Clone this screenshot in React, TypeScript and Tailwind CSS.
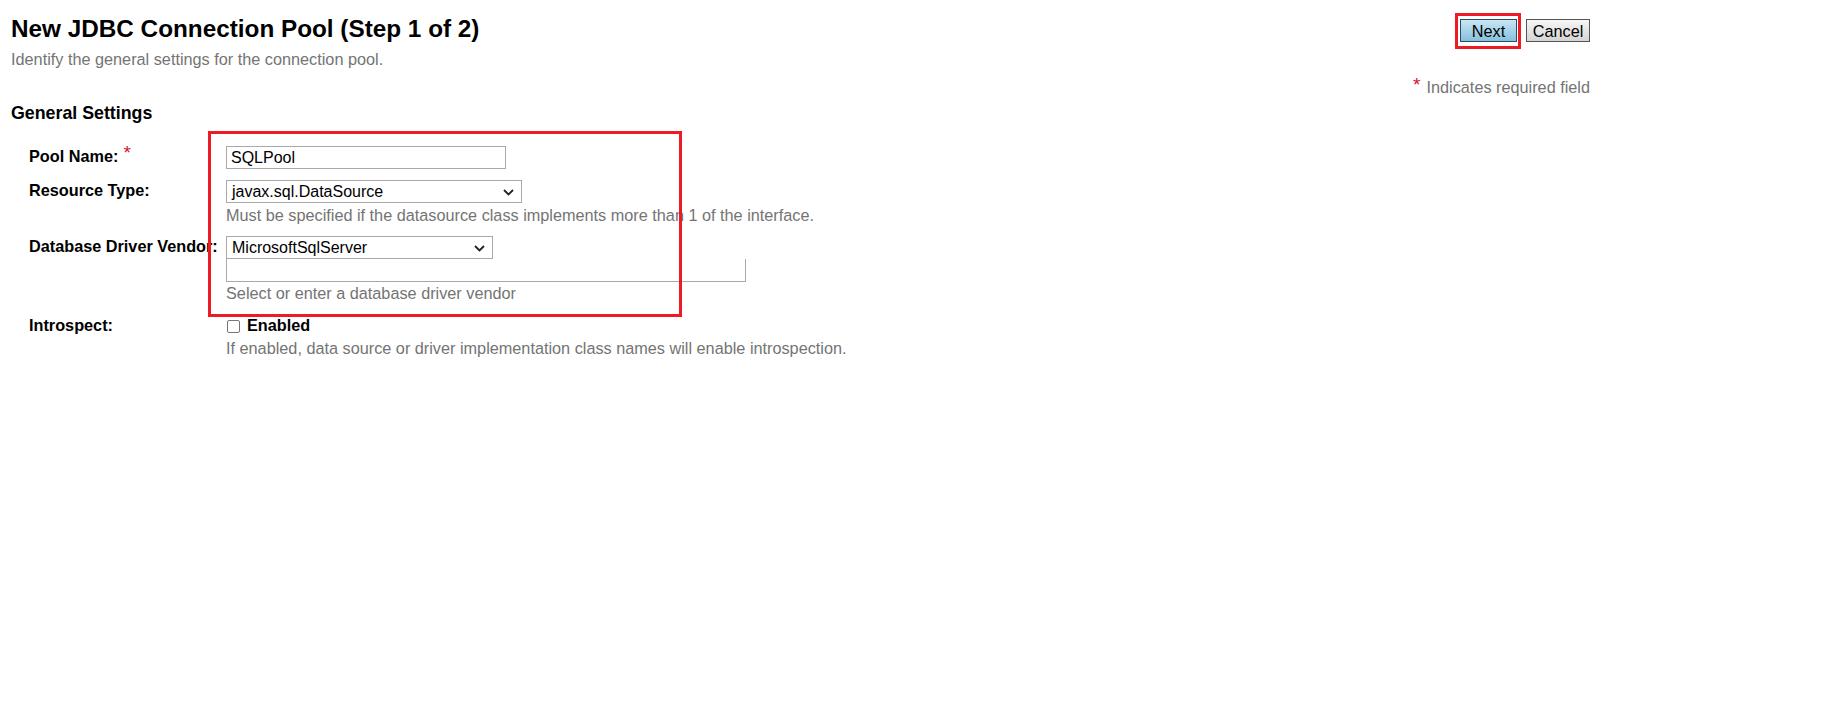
import React from "react";

function Chevron() {
  return (
    <svg width="11" height="7" viewBox="0 0 11 7" className="absolute right-[7px] top-[8px]" fill="none">
      <path d="M1 1 L5.5 5.5 L10 1" stroke="#222" strokeWidth="1.8" />
    </svg>
  );
}

export default function App() {
  return (
    <div className="min-h-[711px] w-full bg-white text-black font-['Liberation_Sans',Arial,sans-serif]">
      <div className="relative w-[1590px] pl-[11px] pt-[15px]">
        {/* Header */}
        <div className="flex justify-between">
          <div>
            <h1 className="text-[24.3px] leading-[28px] font-bold">New JDBC Connection Pool (Step 1 of 2)</h1>
            <p className="mt-[6.5px] text-[16.25px] leading-[19px] text-[#747474]">
              Identify the general settings for the connection pool.
            </p>
          </div>
          <div className="flex h-fit gap-[9px] pt-[4px]">
            <div className="relative">
              <button className="h-[23px] w-[57px] border border-[#2f4d60] bg-gradient-to-b from-[#c9e6f4] to-[#86c0de] text-[16.25px] leading-[20px] text-black">
                Next
              </button>
              <div className="pointer-events-none absolute left-[-5px] top-[-6px] h-[36px] w-[66px] border-[3px] border-[#ed1c24]" />
            </div>
            <button className="h-[23px] w-[64px] border border-[#555] bg-gradient-to-b from-[#f6f6f6] to-[#d4d4d4] text-[16.25px] leading-[20px] text-black">
              Cancel
            </button>
          </div>
        </div>

        <div className="mt-[9px] flex justify-end text-[16.25px] leading-[19px] text-[#747474]">
          <span className="relative top-[0px] mr-[6px] text-[19px] leading-[14px] text-[#d0142c]">*</span>
          <span>Indicates required field</span>
        </div>

        <h2 className="mt-[6px] text-[17.8px] leading-[21px] font-bold">General Settings</h2>

        {/* Form */}
        <div className="mt-[22.5px] grid grid-cols-[197px_1fr] pl-[18px] text-[16.25px] leading-[20px]">
          {/* Pool Name */}
          <div className="font-bold">
            Pool Name:<span className="relative top-[-3px] ml-[5px] text-[19px] font-normal text-[#d0142c]">*</span>
          </div>
          <div>
            <div className="flex h-[23px] w-[280px] items-center border border-[#a9a9a9] px-[4px] text-[16px]">SQLPool</div>
          </div>

          {/* Resource Type */}
          <div className="mt-[11px] font-bold">Resource Type:</div>
          <div className="mt-[11px]">
            <div className="relative flex h-[23px] w-[296px] items-center border border-[#a9a9a9] px-[5px] text-[16px]">
              javax.sql.DataSource
              <Chevron />
            </div>
            <div className="mt-[3px] text-[16.25px] leading-[19px] text-[#747474]">
              Must be specified if the datasource class implements more than 1 of the interface.
            </div>
          </div>

          {/* Database Driver Vendor */}
          <div className="mt-[11px] whitespace-nowrap font-bold">Database Driver Vendor:</div>
          <div className="mt-[11px]">
            <div className="relative flex h-[23px] w-[267px] items-center border border-[#a9a9a9] px-[5px] text-[16px]">
              MicrosoftSqlServer
              <Chevron />
            </div>
            <div className="h-[23px] w-[520px] border border-t-0 border-[#a9a9a9]" />
            <div className="mt-[1.5px] text-[16.25px] leading-[19px] text-[#747474]">
              Select or enter a database driver vendor
            </div>
          </div>

          {/* Introspect */}
          <div className="mt-[12.5px] font-bold">Introspect:</div>
          <div className="mt-[12.5px]">
            <div className="flex items-center gap-[7px]">
              <span className="ml-[1px] mt-[2px] inline-block h-[13px] w-[13px] rounded-[2px] border border-[#767676] bg-white" />
              <span className="font-bold">Enabled</span>
            </div>
            <div className="mt-[4px] text-[16.25px] leading-[19px] text-[#747474]">
              If enabled, data source or driver implementation class names will enable introspection.
            </div>
          </div>
        </div>

        {/* Red annotation box */}
        <div className="pointer-events-none absolute left-[208px] top-[131px] h-[186px] w-[474px] border-[3px] border-[#ed1c24]" />
      </div>
    </div>
  );
}
